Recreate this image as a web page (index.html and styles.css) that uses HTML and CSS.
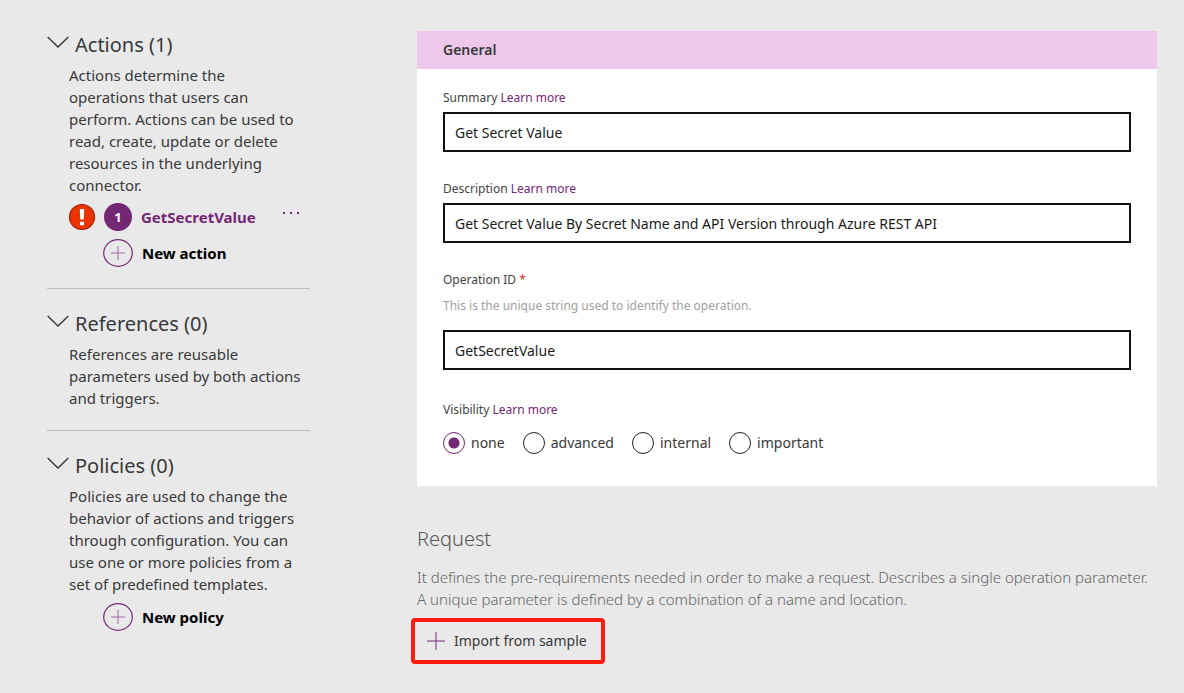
FILE: index.html
```html
<!DOCTYPE html>
<html lang="en">
<head>
<meta charset="utf-8">
<title>Connector definition</title>
<link rel="stylesheet" href="styles.css">
</head>
<body>
<div class="page">
  <aside class="sidebar">
    <section class="group">
      <h2 class="group-title"><button type="button" class="toggle"><svg class="chevron" viewBox="0 0 22 12" aria-hidden="true"><path d="M0.700 1 L11 11 L21.300 1"/></svg>Actions (1)</button></h2>
      <p class="group-text">Actions determine the operations that users can perform. Actions can be used to read, create, update or delete resources in the underlying connector.</p>
      <div class="action">
        <svg class="alert" viewBox="0 0 28 28" role="img" aria-label="Error"><circle cx="14" cy="14" r="12.500"/><path d="M11.800 6h4.400l-.5 10.500h-3.400zM12 18.800h4v3.400h-4z"/></svg>
        <span class="badge">1</span>
        <a class="action-name" href="#">GetSecretValue</a>
        <button type="button" class="more" aria-label="More options"><svg viewBox="0 0 18 4" aria-hidden="true"><path d="M1 1h2v2H1zM8 1h2v2H8zM15 1h2v2h-2z"/></svg></button>
      </div>
      <button type="button" class="new"><svg class="plus-circle" viewBox="0 0 30 28" aria-hidden="true"><ellipse cx="15" cy="14" rx="14.300" ry="13.300"/><path d="M8 14h14M15 7v14"/></svg>New action</button>
    </section>
    <section class="group">
      <h2 class="group-title"><button type="button" class="toggle"><svg class="chevron" viewBox="0 0 22 12" aria-hidden="true"><path d="M0.700 1 L11 11 L21.300 1"/></svg>References (0)</button></h2>
      <p class="group-text">References are reusable parameters used by both actions and triggers.</p>
    </section>
    <section class="group">
      <h2 class="group-title"><button type="button" class="toggle"><svg class="chevron" viewBox="0 0 22 12" aria-hidden="true"><path d="M0.700 1 L11 11 L21.300 1"/></svg>Policies (0)</button></h2>
      <p class="group-text">Policies are used to change the behavior of actions and triggers through configuration. You can use one or more policies from a set of predefined templates.</p>
      <button type="button" class="new"><svg class="plus-circle" viewBox="0 0 30 28" aria-hidden="true"><ellipse cx="15" cy="14" rx="14.300" ry="13.300"/><path d="M8 14h14M15 7v14"/></svg>New policy</button>
    </section>
  </aside>
  <main class="main">
    <section class="card">
      <h2 class="card-title">General</h2>
      <form class="form">
        <div class="field">
          <div class="label"><label for="summary">Summary</label> <a href="#">Learn more</a></div>
          <input class="text" id="summary" type="text" value="Get Secret Value">
        </div>
        <div class="field">
          <div class="label"><label for="description">Description</label> <a href="#">Learn more</a></div>
          <input class="text" id="description" type="text" value="Get Secret Value By Secret Name and API Version through Azure REST API">
        </div>
        <div class="field">
          <div class="label"><label for="operation">Operation ID <span class="required">*</span></label></div>
          <p class="hint" id="operation-hint">This is the unique string used to identify the operation.</p>
          <input class="text" id="operation" type="text" aria-describedby="operation-hint" value="GetSecretValue">
        </div>
        <div class="field choices" role="radiogroup" aria-labelledby="visibility">
          <div class="label"><span id="visibility">Visibility</span> <a href="#">Learn more</a></div>
          <div class="radios">
            <label class="option"><input type="radio" name="visibility" checked>none</label>
            <label class="option"><input type="radio" name="visibility">advanced</label>
            <label class="option"><input type="radio" name="visibility">internal</label>
            <label class="option"><input type="radio" name="visibility">important</label>
          </div>
        </div>
      </form>
    </section>
    <section class="request">
      <h2 class="request-title">Request</h2>
      <p class="request-text">It defines the pre-requirements needed in order to make a request. Describes a single operation parameter. A unique parameter is defined by a combination of a name and location.</p>
      <button type="button" class="import"><svg class="plus" viewBox="0 0 18 18" aria-hidden="true"><path d="M0 9h18M9 0v18"/></svg>Import from sample</button>
    </section>
  </main>
</div>
</body>
</html>
```
FILE: styles.css
```css
* { box-sizing: border-box; }

body {
  margin: 0;
  background: #e9e9e9;
  color: #393939;
  font: 15px/22px "Noto Sans", "Open Sans", sans-serif;
}

h2, p { margin: 0; font-weight: 400; }

button {
  padding: 0;
  border: 0;
  background: none;
  color: inherit;
  font: inherit;
  cursor: pointer;
}

a { color: #742774; text-decoration: none; }
svg { display: block; flex: none; }

.page {
  display: grid;
  grid-template-columns: 263px minmax(0, 1fr);
  column-gap: 107px;
  padding: 30px 27px;
  padding-left: 47px;
}

.group + .group {
  margin-top: 21px;
  padding-top: 20px;
  border-top: 1px solid #bdbdbd;
}

.group-title { font-size: 20px; line-height: 30px; }
.toggle { display: flex; gap: 6px; }
.chevron { width: 22px; height: 12px; margin-top: 6px; fill: none; stroke: #333; stroke-width: 1.3; }
.group-text { max-width: 234px; margin: 4px 0 0 22px; }

.action {
  display: flex;
  align-items: center;
  margin: 7px 10px 8px 21px;
}

.alert { width: 28px; height: 28px; }
.alert circle { fill: #eb3300; stroke: #a32005; stroke-width: 1.2; }
.alert path { fill: #fff; }

.badge {
  width: 28px;
  margin: 0 9px 0 8px;
  border-radius: 50%;
  background: #742774;
  color: #fff;
  font-size: 13px;
  font-weight: 700;
  line-height: 28px;
  text-align: center;
}

.action-name { font-weight: 700; }
.more { margin: 0 0 8px auto; }
.more svg { width: 18px; height: 4px; fill: #742774; }

.new {
  display: flex;
  align-items: center;
  gap: 9px;
  margin: 8px 0 0 56px;
  color: #000;
  font-weight: 700;
}

.plus-circle { width: 30px; height: 28px; fill: none; stroke: #742774; stroke-width: 1.2; }
.plus-circle path { stroke-width: 1; stroke: #a06aa0; }

.main { padding-top: 1px; }
.card { background: #fff; }

.card-title {
  padding: 0 26px;
  background: #edc8eb;
  font-size: 14px;
  font-weight: 600;
  line-height: 38px;
}

.form {
  display: grid;
  gap: 27px;
  padding: 19px 26px 32px;
}

.label { color: #444; font-size: 12px; line-height: 20px; }
.required { color: #d13438; }
.hint { margin: 6px 0 14px; color: #a0a0a0; font-size: 12px; line-height: 20px; }

.text {
  display: block;
  width: 100%;
  height: 40px;
  margin-top: 4px;
  padding: 0 10px;
  border: 2px solid #111;
  border-radius: 0;
  background: #fff;
  color: #1b1b1b;
  font: inherit;
  font-size: 14px;
}

.choices { padding-top: 3px; }
.radios { display: flex; flex-wrap: wrap; gap: 18px; margin-top: 12px; }
.option { display: flex; align-items: center; gap: 6px; font-size: 14px; }

.option input {
  appearance: none;
  width: 22px;
  height: 22px;
  margin: 0;
  border: 1px solid #222;
  border-radius: 50%;
}

.option input:checked {
  border-color: #742774;
  background: radial-gradient(circle, #742774 5px, transparent 6px);
}

.request { margin-top: 38px; }
.request-title { color: #555; font-size: 20px; font-weight: 300; line-height: 30px; }
.request-text { margin-top: 12px; color: #666; font-weight: 300; }

.import {
  display: flex;
  align-items: center;
  gap: 9px;
  margin: 8px 0 0 -6px;
  padding: 8px 14px 8px 12px;
  border: 4px solid #fc1c10;
  border-radius: 4px;
  font-size: 14px;
}

.plus { width: 18px; height: 18px; fill: none; stroke: #742774; }
```
